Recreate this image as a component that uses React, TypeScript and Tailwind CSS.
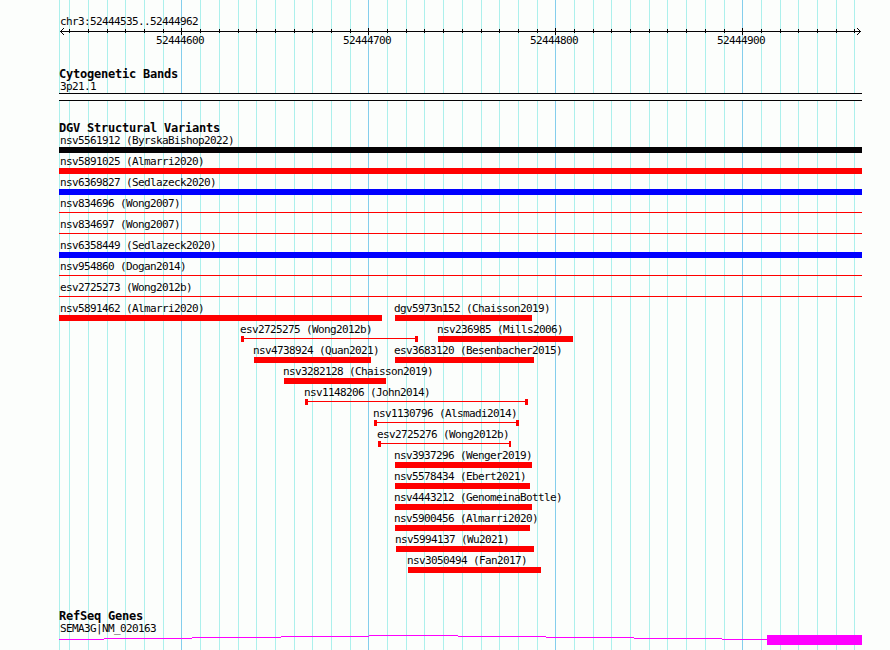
import clsx from "clsx";

const LEFT = 59;

const MAJOR_LINES = [181, 368, 555, 742];

const GRID_LINES = [
    59, 69, 88, 107, 125, 144, 163, 181, 200, 219, 238, 256, 275, 294, 312, 331, 350, 368,
    387, 406, 424, 443, 462, 481, 499, 518, 537, 555, 574, 593, 611, 630, 649, 667, 686,
    705, 724, 742, 761, 780, 798, 817, 836, 854
]

const RULER_LABELS = [
    { text: "52444600", x: 156 },
    { text: "52444700", x: 343 },
    { text: "52444800", x: 530 },
    { text: "52444900", x: 717 }
]

type Variant = {
    name: string;
    start: number;
    end: number;
    kind?: "bar" | "line" | "range";
    color?: string;
    cap?: string;
}

const ROWS: Variant[][] = [
    [{ name: "nsv5561912 (ByrskaBishop2022)", start: 59, end: 862, color: "bg-[#040204]" }],
    [{ name: "nsv5891025 (Almarri2020)", start: 59, end: 862 }],
    [{ name: "nsv6369827 (Sedlazeck2020)", start: 59, end: 862, color: "bg-[#0000ff]" }],
    [{ name: "nsv834696 (Wong2007)", start: 59, end: 862, kind: "line" }],
    [{ name: "nsv834697 (Wong2007)", start: 59, end: 862, kind: "line" }],
    [{ name: "nsv6358449 (Sedlazeck2020)", start: 59, end: 862, color: "bg-[#0000ff]" }],
    [{ name: "nsv954860 (Dogan2014)", start: 59, end: 862, kind: "line" }],
    [{ name: "esv2725273 (Wong2012b)", start: 59, end: 862, kind: "line" }],
    [
        { name: "nsv5891462 (Almarri2020)", start: 59, end: 382 },
        { name: "dgv5973n152 (Chaisson2019)", start: 395, end: 532 }
    ],
    [
        { name: "esv2725275 (Wong2012b)", start: 241, end: 418, kind: "range" },
        { name: "nsv236985 (Mills2006)", start: 438, end: 573 }
    ],
    [
        { name: "nsv4738924 (Quan2021)", start: 254, end: 371 },
        { name: "esv3683120 (Besenbacher2015)", start: 395, end: 534 }
    ],
    [{ name: "nsv3282128 (Chaisson2019)", start: 284, end: 386 }],
    [{ name: "nsv1148206 (John2014)", start: 305, end: 528, kind: "range" }],
    [{ name: "nsv1130796 (Alsmadi2014)", start: 374, end: 519, kind: "range" }],
    [{ name: "esv2725276 (Wong2012b)", start: 378, end: 511, kind: "range", cap: "w-[2px]" }],
    [{ name: "nsv3937296 (Wenger2019)", start: 395, end: 532 }],
    [{ name: "nsv5578434 (Ebert2021)", start: 395, end: 530 }],
    [{ name: "nsv4443212 (GenomeinaBottle)", start: 395, end: 532 }],
    [{ name: "nsv5900456 (Almarri2020)", start: 395, end: 530 }],
    [{ name: "nsv5994137 (Wu2021)", start: 396, end: 534 }],
    [{ name: "nsv3050494 (Fan2017)", start: 408, end: 541 }]
]

function Label({ children, className }: { children: string, className?: string }) {
    return (
        <p className={clsx("h-3 whitespace-pre text-[11px] leading-3 tracking-[-0.622px]", className)}>{children}</p>
    )
}

function Heading({ children }: { children: string }) {
    return (
        <h2 className="h-[13px] whitespace-pre text-[12px] font-bold leading-3 tracking-[-0.224px]">{children}</h2>
    )
}

function Grid() {
    return (
        <div className="absolute inset-0">
            {
                GRID_LINES.map((x) => (
                    <div
                        key={x}
                        className={clsx("absolute inset-y-0 w-px", MAJOR_LINES.includes(x) ? "bg-[#84ceec]" : "bg-[#acf0ec]")}
                        style={{ left: x }}
                    />
                ))
            }
        </div>
    )
}

function Ruler() {
    return (
        <svg width="803" height="7" viewBox="59 28 803 7" shapeRendering="crispEdges" className="block fill-[#040204]">
            <rect x="60" y="31" width="801" height="1" />
            {
                GRID_LINES.slice(1).map((x) => (
                    MAJOR_LINES.includes(x)
                        ? <rect key={x} x={x} y="28" width="1" height="7" />
                        : <rect key={x} x={x} y="29" width="1" height="4" />
                ))
            }
            {
                [1, 2, 3].map((d) => (
                    <g key={d}>
                        <rect x={60 + d} y={31 - d} width="1" height="1" />
                        <rect x={60 + d} y={31 + d} width="1" height="1" />
                        <rect x={860 - d} y={31 - d} width="1" height="1" />
                        <rect x={860 - d} y={31 + d} width="1" height="1" />
                    </g>
                ))
            }
        </svg>
    )
}

function Glyph({ kind = "bar", color = "bg-[#ff0000]", cap = "w-[3px]" }: Variant) {
    if (kind === "bar") return <div className={clsx("h-1.5", color)} />
    if (kind === "line") return <div className="pt-0.5"><div className={clsx("h-px", color)} /></div>
    return (
        <div className="flex h-1.5">
            <div className={clsx("w-[3px]", color)} />
            <div className={clsx("mt-0.5 h-px flex-1", color)} />
            <div className={clsx(cap, color)} />
        </div>
    )
}

function VariantRow({ items }: { items: Variant[] }) {
    return (
        <div className="flex h-[21px]">
            {
                items.map((item, index) => (
                    <div
                        key={item.name}
                        className="shrink-0"
                        style={{
                            width: item.end - item.start,
                            marginLeft: item.start - (index === 0 ? LEFT : items[index - 1].end)
                        }}
                    >
                        <Label className={item.start === LEFT ? "ml-px" : "-ml-px"}>{item.name}</Label>
                        <Glyph {...item} />
                    </div>
                ))
            }
        </div>
    )
}

function Gene() {
    return (
        <svg width="803" height="10" viewBox="59 635 803 10" shapeRendering="crispEdges" className="block fill-[#ff00ff]">
            <rect x="59" y="639" width="45" height="1" />
            <rect x="104" y="638" width="88" height="1" />
            <rect x="192" y="637" width="89" height="1" />
            <rect x="281" y="636" width="88" height="1" />
            <rect x="369" y="635" width="89" height="1" />
            <rect x="458" y="636" width="88" height="1" />
            <rect x="546" y="637" width="88" height="1" />
            <rect x="634" y="638" width="88" height="1" />
            <rect x="722" y="639" width="45" height="1" />
            <rect x="767" y="635" width="95" height="10" />
        </svg>
    )
}

export default function App() {
    return (
        <main className="relative h-[650px] w-[890px] overflow-hidden bg-[#fcfefc] font-['DejaVu_Sans_Mono',monospace] text-[#040204]">
            <Grid />
            <div className="relative ml-[59px] w-[803px]">
                <section className="h-[68px] pt-4">
                    <Label className="ml-px">chr3:52444535..52444962</Label>
                    <Ruler />
                    <div className="flex">
                        {
                            RULER_LABELS.map(({ text, x }, index) => (
                                <div
                                    key={text}
                                    className="w-12"
                                    style={{ marginLeft: index === 0 ? x - LEFT : x - RULER_LABELS[index - 1].x - 48 }}
                                >
                                    <Label>{text}</Label>
                                </div>
                            ))
                        }
                    </div>
                </section>
                <section className="h-[54px]">
                    <Heading>Cytogenetic Bands</Heading>
                    <Label className="ml-px">3p21.1</Label>
                    <div className="h-2 border-y border-[#040204] bg-[#fcfefc]" />
                </section>
                <section className="h-[488px]">
                    <Heading>DGV Structural Variants</Heading>
                    {ROWS.map((items) => <VariantRow key={items[0].name} items={items} />)}
                </section>
                <section>
                    <Heading>RefSeq Genes</Heading>
                    <Label className="ml-px">SEMA3G|NM_020163</Label>
                    <Gene />
                </section>
            </div>
        </main>
    )
}
